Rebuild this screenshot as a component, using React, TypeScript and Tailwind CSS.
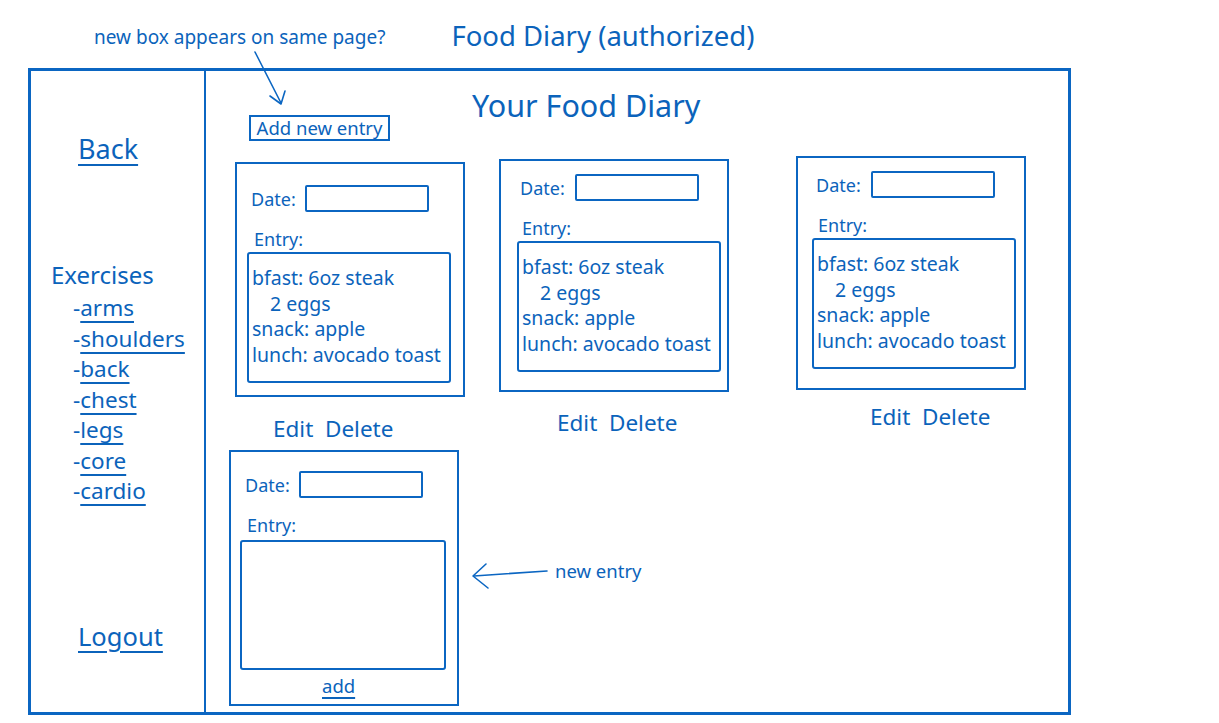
import React from "react";

const C = "text-[#0b63bb]";

type CardProps = {
  cardCls: string;
  dateCls: string;
  inputCls: string;
  entryCls: string;
  areaCls: string;
  lines?: boolean;
  footer?: React.ReactNode;
};

function Card({ cardCls, dateCls, inputCls, entryCls, areaCls, lines, footer }: CardProps) {
  return (
    <div className={`w-[230px] border-2 border-[#0b66c2] flex flex-col ${cardCls}`}>
      <div className={`flex items-center ${dateCls}`}>
        <span className="text-[18px] leading-[22px]">Date:</span>
        <div className={`w-[124px] h-[27px] border-2 border-[#0b66c2] rounded-[2px] ${inputCls}`} />
      </div>
      <div className={`text-[18px] leading-[22px] ${entryCls}`}>Entry:</div>
      <div className={`border-2 border-[#0b66c2] rounded-[3px] ${areaCls}`}>
        {lines && (
          <div className="pt-[11px] pl-[3px] text-[19.5px] leading-[25.5px] whitespace-nowrap">
            <div>bfast: 6oz steak</div>
            <div className="pl-[18px]">2 eggs</div>
            <div>snack: apple</div>
            <div>lunch: avocado toast</div>
          </div>
        )}
      </div>
      {footer}
    </div>
  );
}

function EditDelete({ cls }: { cls: string }) {
  return (
    <div className={`text-[22.5px] leading-[28px] whitespace-pre ${cls}`}>Edit  Delete</div>
  );
}

export default function App() {
  const links = ["arms", "shoulders", "back", "chest", "legs", "core", "cardio"];
  return (
    <div
      className={`relative w-[1219px] h-[723px] bg-white overflow-hidden ${C}`}
      style={{ fontFamily: '"Noto Sans", "Open Sans", sans-serif' }}
    >
      {/* header */}
      <div className="flex items-start h-[68px]">
        <div className="ml-[94px] mt-[25px] text-[19px] leading-[24px] whitespace-nowrap">new box appears on same page?</div>
        <div className="ml-[66px] mt-[19px] text-[27.5px] leading-[34px] whitespace-nowrap">Food Diary (authorized)</div>
      </div>

      {/* frame */}
      <div className="ml-[28px] w-[1043px] h-[647px] border-[3px] border-[#0b66c2] flex">
        {/* sidebar */}
        <div className="w-[175px] border-r-2 border-[#0b66c2] flex flex-col">
          <a className="ml-[47px] mt-[62px] text-[27px] leading-[32px] underline underline-offset-[5px] decoration-2 self-start">Back</a>
          <div className="ml-[20px] mt-[96px] text-[24px] leading-[28px]">Exercises</div>
          <div className="ml-[42px] mt-[4px] flex flex-col">
            {links.map((l) => (
              <div key={l} className="text-[22.5px] leading-[30.5px]">
                -<span className="underline underline-offset-[5px] decoration-2">{l}</span>
              </div>
            ))}
          </div>
          <a className="ml-[47px] mt-[113px] text-[25.5px] leading-[32px] underline underline-offset-[5px] decoration-2 self-start">Logout</a>
        </div>

        {/* content */}
        <div className="flex-1 flex flex-col">
          <div className="ml-[266px] mt-[16px] text-[30.5px] leading-[36px] whitespace-nowrap">Your Food Diary</div>
          <div className="ml-[43px] -mt-[8px] w-[141px] h-[26px] border-2 border-[#0b66c2] flex items-center justify-center text-[18.5px] leading-[22px] whitespace-nowrap">
            Add new entry
          </div>

          <div className="flex items-start mt-[15px]">
            <div className="ml-[29px] flex flex-col">
              <Card
                cardCls="mt-[6px] h-[235px]"
                dateCls="mt-[21px] ml-[14px]"
                inputCls="ml-[9px]"
                entryCls="ml-[17px] mt-[16px]"
                areaCls="ml-[10px] mt-[2px] w-[204px] h-[131px]"
                lines
              />
              <EditDelete cls="mt-[18px] ml-[38px]" />
            </div>
            <div className="ml-[34px] flex flex-col">
              <Card
                cardCls="mt-[3px] h-[233px]"
                dateCls="mt-[13px] ml-[19px]"
                inputCls="ml-[10px]"
                entryCls="ml-[21px] mt-[16px]"
                areaCls="ml-[16px] mt-[2px] w-[204px] h-[131px]"
                lines
              />
              <EditDelete cls="mt-[17px] ml-[58px]" />
            </div>
            <div className="ml-[67px] flex flex-col">
              <Card
                cardCls="h-[234px]"
                dateCls="mt-[13px] ml-[18px]"
                inputCls="ml-[10px]"
                entryCls="ml-[20px] mt-[16px]"
                areaCls="ml-[14px] mt-[2px] w-[204px] h-[131px]"
                lines
              />
              <EditDelete cls="mt-[13px] ml-[74px]" />
            </div>
          </div>

          <div className="ml-[23px] mt-[7px]">
            <Card
              cardCls="h-[256px]"
              dateCls="mt-[19px] ml-[14px]"
              inputCls="ml-[9px]"
              entryCls="ml-[16px] mt-[16px]"
              areaCls="ml-[9px] mt-[4px] w-[206px] h-[130px]"
              footer={
                <div className="mt-[5px] self-start ml-[91px] text-[18.5px] leading-[22px] underline underline-offset-[4px] decoration-2">
                  add
                </div>
              }
            />
          </div>
        </div>
      </div>

      {/* annotation arrows */}
      <svg className="absolute left-0 top-0 pointer-events-none" width="1219" height="723">
        <g stroke="#0b66c2" strokeWidth="1.6" fill="none" strokeLinecap="round" strokeLinejoin="round">
          <path d="M255 52 L281 103" />
          <path d="M270 96 L281 104 L285 91" />
          <path d="M547 571 L474 576" />
          <path d="M486 564 L473 576 L488 588" />
        </g>
      </svg>
      <div className="absolute left-[555px] top-[560px] text-[18.5px] leading-[22px] whitespace-nowrap">new entry</div>
    </div>
  );
}
